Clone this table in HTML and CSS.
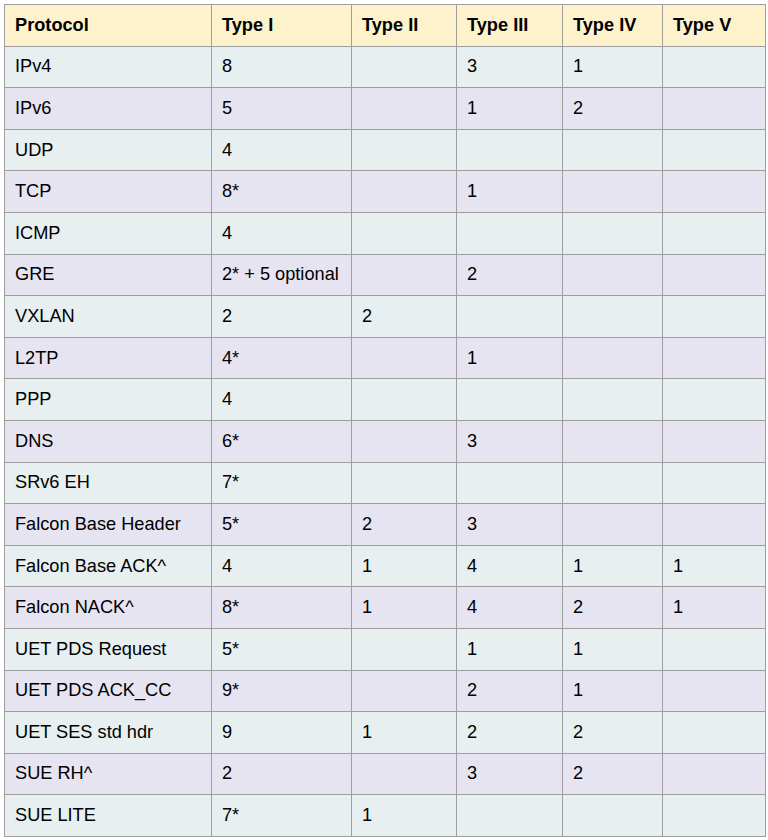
FILE: index.html
```html
<!DOCTYPE html>
<html>
<head>
<meta charset="utf-8">
<link rel="stylesheet" href="styles.css">
</head>
<body>
<table class="grid">
  <colgroup>
    <col class="c1"><col class="c2"><col class="c3"><col class="c4"><col class="c5"><col class="c6">
  </colgroup>
  <thead>
    <tr class="head"><th>Protocol</th><th>Type I</th><th>Type II</th><th>Type III</th><th>Type IV</th><th>Type V</th></tr>
  </thead>
  <tbody>
    <tr class="a"><td>IPv4</td><td>8</td><td></td><td>3</td><td>1</td><td></td></tr>
    <tr class="b"><td>IPv6</td><td>5</td><td></td><td>1</td><td>2</td><td></td></tr>
    <tr class="a"><td>UDP</td><td>4</td><td></td><td></td><td></td><td></td></tr>
    <tr class="b"><td>TCP</td><td>8*</td><td></td><td>1</td><td></td><td></td></tr>
    <tr class="a"><td>ICMP</td><td>4</td><td></td><td></td><td></td><td></td></tr>
    <tr class="b"><td>GRE</td><td>2* + 5 optional</td><td></td><td>2</td><td></td><td></td></tr>
    <tr class="a"><td>VXLAN</td><td>2</td><td>2</td><td></td><td></td><td></td></tr>
    <tr class="b"><td>L2TP</td><td>4*</td><td></td><td>1</td><td></td><td></td></tr>
    <tr class="a"><td>PPP</td><td>4</td><td></td><td></td><td></td><td></td></tr>
    <tr class="b"><td>DNS</td><td>6*</td><td></td><td>3</td><td></td><td></td></tr>
    <tr class="a"><td>SRv6 EH</td><td>7*</td><td></td><td></td><td></td><td></td></tr>
    <tr class="b"><td>Falcon Base Header</td><td>5*</td><td>2</td><td>3</td><td></td><td></td></tr>
    <tr class="a"><td>Falcon Base ACK^</td><td>4</td><td>1</td><td>4</td><td>1</td><td>1</td></tr>
    <tr class="b"><td>Falcon NACK^</td><td>8*</td><td>1</td><td>4</td><td>2</td><td>1</td></tr>
    <tr class="a"><td>UET PDS Request</td><td>5*</td><td></td><td>1</td><td>1</td><td></td></tr>
    <tr class="b"><td>UET PDS ACK_CC</td><td>9*</td><td></td><td>2</td><td>1</td><td></td></tr>
    <tr class="a"><td>UET SES std hdr</td><td>9</td><td>1</td><td>2</td><td>2</td><td></td></tr>
    <tr class="b"><td>SUE RH^</td><td>2</td><td></td><td>3</td><td>2</td><td></td></tr>
    <tr class="a"><td>SUE LITE</td><td>7*</td><td>1</td><td></td><td></td><td></td></tr>
  </tbody>
</table>
</body>
</html>
```
FILE: styles.css
```css
html, body {
  margin: 0;
  padding: 0;
  background: #ffffff;
}
body {
  padding: 4px;
  font-family: "Liberation Sans", Arial, sans-serif;
  color: #000000;
}
.grid {
  border-collapse: collapse;
  table-layout: fixed;
  width: 761px;
  font-size: 18.2px;
}
.c1 { width: 207px; }
.c2 { width: 140px; }
.c3 { width: 105px; }
.c4 { width: 106px; }
.c5 { width: 100px; }
.c6 { width: 103px; }
.grid th, .grid td {
  border: 1px solid #9e9e9e;
  padding: 0 10px;
  height: 40.6px;
  text-align: left;
  vertical-align: middle;
  white-space: nowrap;
}
.grid th {
  font-weight: bold;
}
.head { background: #fef2cd; }
.a { background: #e7eff0; }
.b { background: #e7e4f2; }
```
